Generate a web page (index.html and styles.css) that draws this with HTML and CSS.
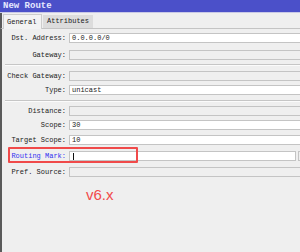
FILE: index.html
```html
<!DOCTYPE html>
<html>
<head>
<meta charset="utf-8">
<link rel="stylesheet" href="styles.css">
</head>
<body>
<div class="window">
  <div class="titlebar">New Route</div>
  <div class="tabs">
    <div class="tab active">General</div>
    <div class="tab">Attributes</div>
  </div>
  <div class="form">
    <div class="row gap4"><span class="label">Dst. Address:</span><span class="field">0.0.0.0/0</span></div>
    <div class="row gap7"><span class="label">Gateway:</span><span class="field disabled"></span></div>
    <div class="sep gap4"></div>
    <div class="row gap5"><span class="label">Check Gateway:</span><span class="field disabled"></span></div>
    <div class="row gap4"><span class="label">Type:</span><span class="field">unicast</span></div>
    <div class="sep gap5"></div>
    <div class="row gap4"><span class="label">Distance:</span><span class="field disabled"></span></div>
    <div class="row gap4"><span class="label">Scope:</span><span class="field">30</span></div>
    <div class="row gap5"><span class="label">Target Scope:</span><span class="field">10</span></div>
    <div class="row gap6 marked">
      <span class="label link">Routing Mark:</span><span class="field short"><span class="caret"></span></span><span class="dropbtn"></span>
      <div class="highlight"></div>
    </div>
    <div class="row gap6"><span class="label">Pref. Source:</span><span class="field disabled"></span></div>
    <div class="version">v6.x</div>
  </div>
</div>
</body>
</html>
```

FILE: styles.css
```css
html, body {
  margin: 0;
  padding: 0;
}
body {
  width: 300px;
  height: 252px;
  overflow: hidden;
  background: #efefef;
  font-family: "Liberation Mono", "DejaVu Sans Mono", monospace;
}
.window {
  height: 252px;
  display: flex;
  flex-direction: column;
}
.titlebar {
  height: 12px;
  background: #4b50c9;
  color: #e6e8ff;
  font-size: 9px;
  font-weight: bold;
  line-height: 12px;
  padding-left: 3px;
  border-bottom: 1px solid #c9c9e6;
  flex-shrink: 0;
}
.tabs {
  display: flex;
  align-items: flex-end;
  height: 15px;
  border-left: 2px solid #5a5a5a;
  padding-left: 1px;
  border-bottom: 1px solid #c4c4c4;
  flex-shrink: 0;
}
.tab {
  font-size: 7px;
  color: #1a1a1a;
  height: 13px;
  line-height: 13px;
  padding: 0 4px;
  background: #dcdcdc;
  box-sizing: border-box;
}
.tab.active {
  height: 15px;
  width: 39px;
  line-height: 14px;
  background: #f3f3f3;
  border: 1px solid #cdcdcd;
  border-bottom: none;
  margin-bottom: -1px;
  padding: 0 3px;
}
.tab:not(.active) {
  width: 50px;
  padding-left: 4px;
  margin-left: 1px;
}
.form {
  flex: 1;
  border-left: 2px solid #5a5a5a;
  display: flex;
  flex-direction: column;
}
.row {
  display: flex;
  align-items: center;
  height: 10px;
  flex-shrink: 0;
  position: relative;
}
.gap4 { margin-top: 4px; }
.gap5 { margin-top: 5px; }
.gap6 { margin-top: 6px; }
.gap7 { margin-top: 7px; }
.label {
  width: 64px;
  text-align: right;
  font-size: 7px;
  color: #222;
  white-space: nowrap;
  flex-shrink: 0;
}
.label.link {
  color: #3434f0;
}
.field {
  margin-left: 3px;
  width: 240px;
  height: 10px;
  box-sizing: border-box;
  border: 1px solid #c4c4c4;
  background: #fff;
  font-size: 7px;
  line-height: 8px;
  padding-left: 2px;
  color: #1a1a1a;
  flex-shrink: 0;
  display: flex;
  align-items: center;
}
.field.disabled {
  background: #efefef;
}
.field.short {
  width: 227px;
}
.caret {
  width: 1px;
  height: 7px;
  background: #111;
  margin-left: 1px;
}
.dropbtn {
  margin-left: 2px;
  width: 10px;
  height: 10px;
  box-sizing: border-box;
  border: 1px solid #c4c4c4;
  background: #efefef;
  flex-shrink: 0;
}
.sep {
  height: 0;
  margin-left: 3px;
  border-top: 1px solid #c6c6c6;
  border-bottom: 1px solid #fbfbfb;
  flex-shrink: 0;
}
.highlight {
  position: absolute;
  left: 6px;
  top: -4px;
  width: 130px;
  height: 16px;
  box-sizing: border-box;
  border: 2px solid #f04a4a;
  border-radius: 1px;
}
.version {
  margin-top: 10px;
  padding-left: 84px;
  font-family: "Liberation Sans", Arial, sans-serif;
  font-size: 15px;
  line-height: 15px;
  color: #f24a4a;
}
```
